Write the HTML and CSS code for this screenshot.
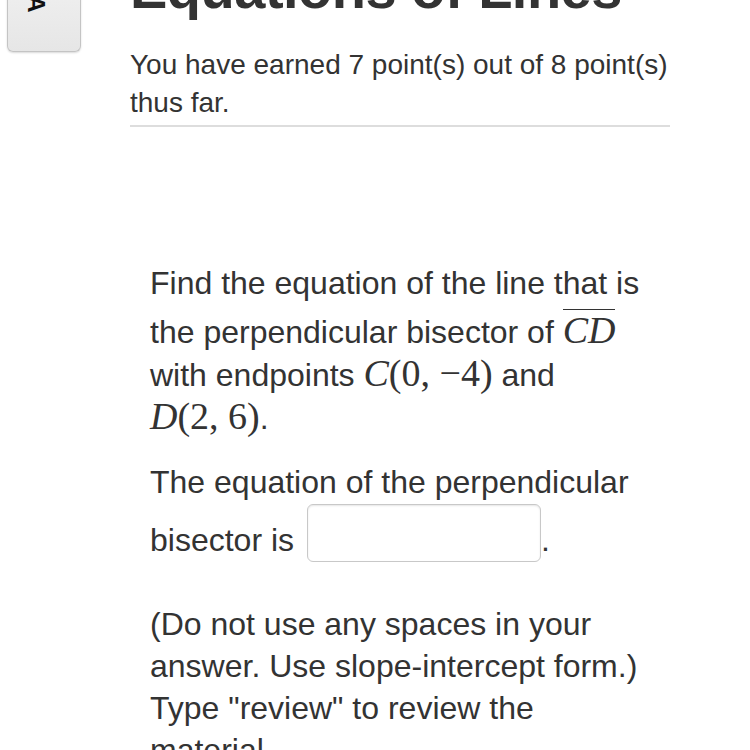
FILE: index.html
```html
<!DOCTYPE html>
<html>
<head>
<meta charset="utf-8">
<link rel="stylesheet" href="styles.css">
</head>
<body>
<div class="page">
  <div class="side">
    <div class="tab"><span class="tab-label">A</span></div>
  </div>
  <div class="main">
    <h1 class="title">Equations of Lines</h1>
    <p class="score">You have earned 7 point(s) out of 8 point(s) thus far.</p>
    <div class="question">
      <p class="q1">Find the equation of the line that is the perpendicular bisector of <span class="math"><span class="over"><i>CD</i></span></span> with endpoints <span class="math"><i>C</i>(0, −4)</span> and <span class="math"><i>D</i>(2, 6)</span>.</p>
      <p class="q2">The equation of the perpendicular bisector is <input class="answer" type="text">.</p>
      <p class="q3">(Do not use any spaces in your answer. Use slope-intercept form.) Type "review" to review the material.</p>
    </div>
  </div>
</div>
</body>
</html>
```

FILE: styles.css
```css
html, body {
  margin: 0;
  padding: 0;
  background: #fff;
  overflow: hidden;
}
body {
  font-family: "Liberation Sans", Arial, sans-serif;
  color: #333;
}
.page {
  display: flex;
  height: 750px;
  overflow: hidden;
}
.side {
  width: 130px;
  flex: none;
}
.tab {
  margin-left: 7px;
  margin-top: -20px;
  width: 72px;
  height: 71px;
  border: 1px solid #c4c4c4;
  border-top: none;
  border-radius: 0 0 6px 6px;
  background: linear-gradient(#f0f0f0, #e6e6e6);
  box-shadow: 0 1px 2px rgba(0,0,0,0.15);
  position: relative;
  overflow: hidden;
}
.tab-label {
  position: absolute;
  left: 19px;
  top: 10px;
  font-weight: bold;
  font-size: 24px;
  color: #111;
  transform: rotate(90deg);
}
.main {
  width: 540px;
  flex: none;
}
.title {
  margin: -39px 0 0 0;
  font-size: 56px;
  line-height: 56px;
  font-weight: bold;
  color: #333;
  letter-spacing: -0.5px;
  white-space: nowrap;
}
.score {
  margin: 29px 0 0 0;
  font-size: 28px;
  line-height: 38px;
  padding-bottom: 3px;
  border-bottom: 2px solid #ddd;
  color: #333;
}
.question {
  padding: 136px 20px 0 20px;
  font-size: 32px;
  color: #333;
}
.question p {
  margin: 0;
}
.q1 {
  line-height: 41px;
}
.math {
  font-family: "Liberation Serif", "Times New Roman", serif;
  font-size: 38px;
  white-space: nowrap;
}
.math i {
  font-style: italic;
}
.over {
  display: inline-block;
  border-top: 1.5px solid #333;
  line-height: 32px;
  padding-top: 4px;
  margin-top: 5px;
}
.q2 {
  margin-top: 15px !important;
  line-height: 57px;
}
.answer {
  width: 234px;
  height: 58px;
  box-sizing: border-box;
  border: 1px solid #c8c8c8;
  border-radius: 6px;
  box-shadow: inset 0 1px 2px rgba(0,0,0,0.1);
  vertical-align: 10px;
  margin: -7px 0 0 4px;
  font-size: 24px;
}
.q3 {
  margin-top: 34px !important;
  line-height: 42px;
}
```
